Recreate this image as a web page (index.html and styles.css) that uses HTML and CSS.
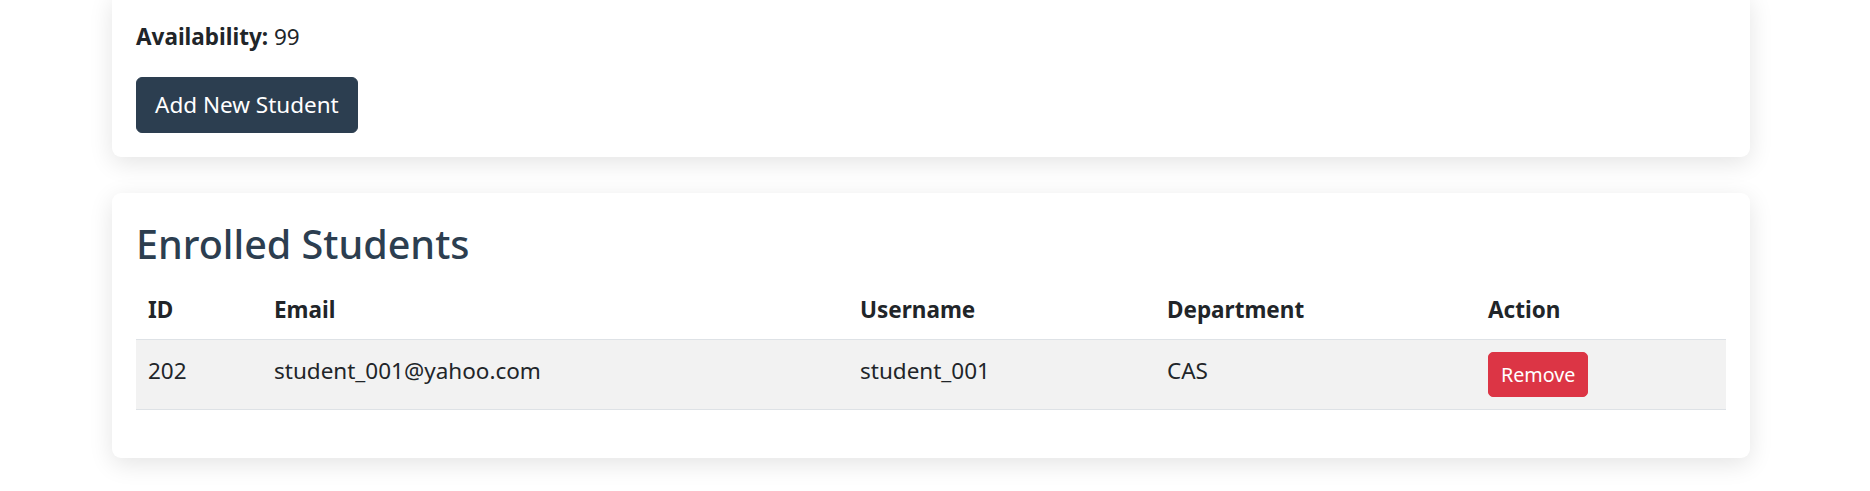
FILE: index.html
```html
<!DOCTYPE html>
<html lang="en">
<head>
<meta charset="utf-8">
<title>Course Students</title>
<link rel="stylesheet" href="styles.css">
</head>
<body>
<main class="page">
  <section class="card card-top">
    <p class="info"><strong>Availability:</strong> 99</p>
    <button class="btn btn-primary" type="button">Add New Student</button>
  </section>

  <section class="card">
    <h3 class="card-title">Enrolled Students</h3>
    <table class="table">
      <colgroup>
        <col class="col-id">
        <col class="col-email">
        <col class="col-user">
        <col class="col-dept">
        <col class="col-action">
      </colgroup>
      <thead>
        <tr>
          <th>ID</th>
          <th>Email</th>
          <th>Username</th>
          <th>Department</th>
          <th>Action</th>
        </tr>
      </thead>
      <tbody>
        <tr>
          <td>202</td>
          <td>student_001@yahoo.com</td>
          <td>student_001</td>
          <td>CAS</td>
          <td class="cell-action"><button class="btn btn-danger btn-sm" type="button">Remove</button></td>
        </tr>
      </tbody>
    </table>
  </section>
</main>
</body>
</html>
```

FILE: styles.css
```css
* {
  box-sizing: border-box;
}

html, body {
  margin: 0;
  background: #ffffff;
}

body {
  font-family: "Segoe UI", "Noto Sans", "Open Sans", sans-serif;
  font-size: 22.5px;
  line-height: 36px;
  color: #212529;
}

.page {
  padding: 0 120px 40px 112px;
  display: flex;
  flex-direction: column;
  gap: 36px;
}

.card {
  background: #ffffff;
  border-radius: 9px;
  padding: 26px 24px 24px;
  box-shadow: 0 6px 24px rgba(0, 0, 0, 0.11);
}

.card-top {
  margin-top: -7px;
}

.info {
  margin: 0 0 22px;
}

.info strong {
  font-weight: 700;
}

.btn {
  display: inline-block;
  font-family: inherit;
  font-size: 22.5px;
  line-height: 36px;
  padding: 9px 18px;
  border: 1px solid transparent;
  border-radius: 6px;
  cursor: pointer;
}

.btn-primary {
  background: #2c3e50;
  border-color: #2c3e50;
  color: #ffffff;
}

.btn-danger {
  background: #dc3545;
  border-color: #dc3545;
  color: #ffffff;
}

.btn-sm {
  font-size: 19.7px;
  line-height: 31px;
  padding: 6px 12px;
  border-radius: 5px;
}

.card-title {
  margin: 0 0 10px;
  font-size: 39.5px;
  line-height: 50px;
  font-weight: 500;
  color: #2c3e50;
}

.table {
  width: 100%;
  border-collapse: collapse;
  table-layout: fixed;
  margin-bottom: 24px;
}

.col-id { width: 126px; }
.col-email { width: 586px; }
.col-user { width: 307px; }
.col-dept { width: 321px; }
.col-action { width: 250px; }

.table th,
.table td {
  text-align: left;
  padding: 13px 12px 11px;
  vertical-align: top;
  border-bottom: 1px solid #dee2e6;
}

.table td.cell-action {
  padding: 12px;
}

.table th {
  font-weight: 700;
}

.table tbody tr {
  background: #f2f2f2;
}
```
